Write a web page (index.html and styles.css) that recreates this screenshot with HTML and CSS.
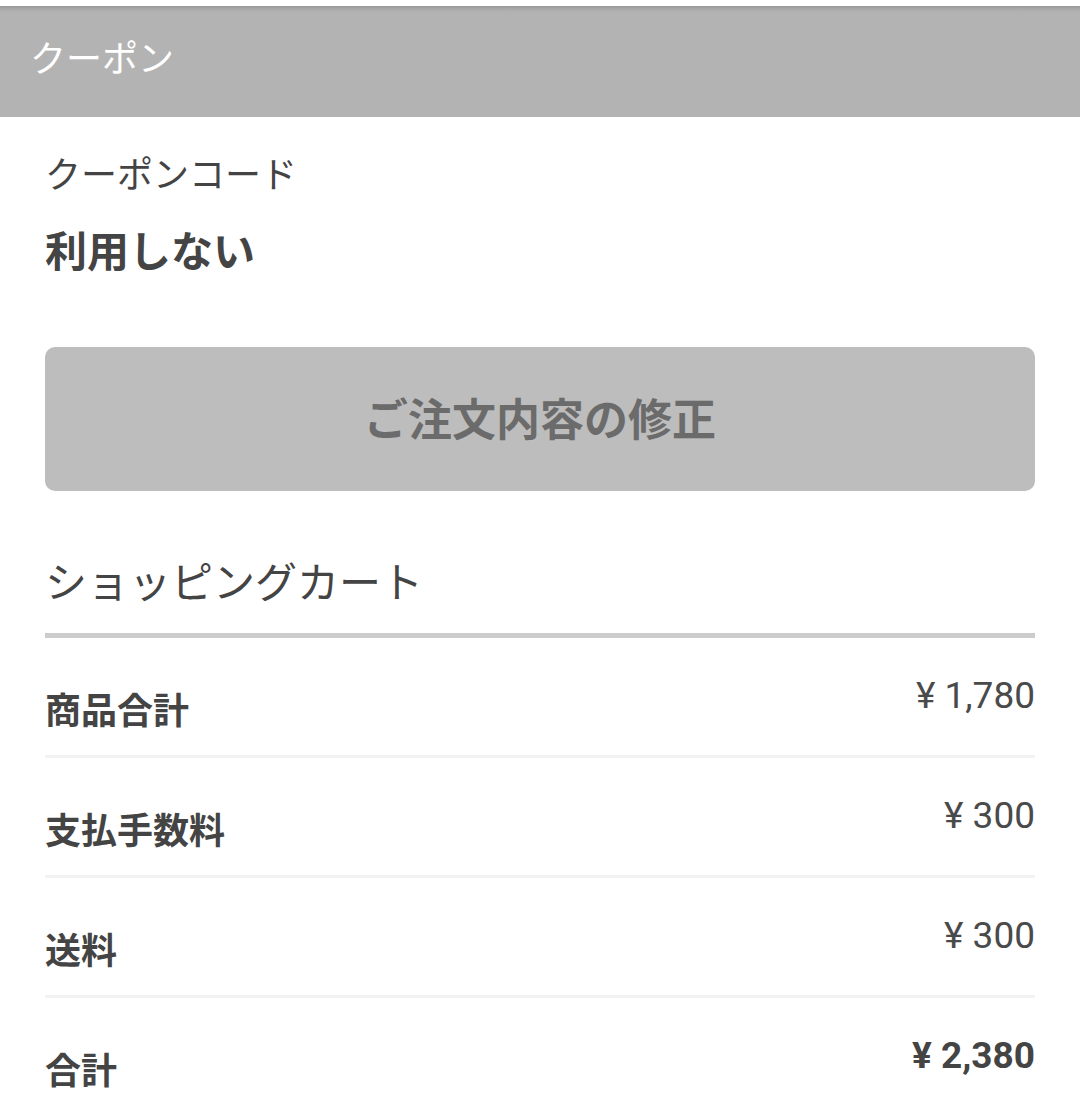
FILE: index.html
```html
<!DOCTYPE html>
<html lang="ja">
<head>
<meta charset="utf-8">
<title>クーポン</title>
<link rel="stylesheet" href="styles.css">
</head>
<body>
<header class="appbar"><span class="appbar-title">クーポン</span></header>
<main class="content">
  <div class="coupon-label">クーポンコード</div>
  <div class="coupon-value">利用しない</div>
  <button class="edit-btn" type="button">ご注文内容の修正</button>
  <h2 class="cart-title">ショッピングカート</h2>
  <div class="cart-rule"></div>
  <div class="row">
    <span class="row-label">商品合計</span>
    <span class="row-price">¥ 1,780</span>
  </div>
  <div class="row">
    <span class="row-label">支払手数料</span>
    <span class="row-price">¥ 300</span>
  </div>
  <div class="row">
    <span class="row-label">送料</span>
    <span class="row-price">¥ 300</span>
  </div>
  <div class="row row-total">
    <span class="row-label">合計</span>
    <span class="row-price">¥ 2,380</span>
  </div>
</main>
</body>
</html>
```

FILE: styles.css
```css
* { box-sizing: border-box; }
html, body {
  margin: 0;
  padding: 0;
  background: #ffffff;
}
body {
  width: 1080px;
  height: 1114px;
  overflow: hidden;
  padding-top: 6px;
  font-family: "Noto Sans CJK JP", "Noto Sans", sans-serif;
  color: #444444;
}
.appbar {
  height: 111px;
  display: flex;
  align-items: center;
  padding: 0 0 11px 30px;
  background: linear-gradient(to bottom, #969696 0px, #a9a9a9 3px, #b3b3b3 6px, #b3b3b3 100%);
}
.appbar-title {
  font-size: 36px;
  line-height: 50px;
  color: #ffffff;
}
.content {
  padding: 0 45px;
}
.coupon-label {
  margin-top: 30px;
  font-size: 36px;
  line-height: 50px;
  color: #444444;
}
.coupon-value {
  margin-top: 27px;
  font-size: 42px;
  line-height: 50px;
  font-weight: 700;
  color: #444444;
}
.edit-btn {
  display: flex;
  align-items: center;
  justify-content: center;
  width: 100%;
  height: 144px;
  margin-top: 73px;
  border: none;
  border-radius: 10px;
  background: #bdbdbd;
  color: #6b6b6b;
  font-family: "Noto Sans CJK JP", sans-serif;
  font-size: 44px;
  font-weight: 700;
  padding: 0 0 4px;
}
.cart-title {
  margin: 64px 0 0;
  font-size: 42px;
  line-height: 50px;
  font-weight: 400;
  color: #444444;
}
.cart-rule {
  margin-top: 28px;
  height: 5px;
  background: #cccccc;
}
.row {
  display: flex;
  justify-content: space-between;
  align-items: flex-start;
  height: 120px;
  border-bottom: 3px solid #f2f2f2;
}
.row-total {
  border-bottom: none;
}
.row-label {
  margin-top: 43px;
  font-size: 36px;
  line-height: 54px;
  font-weight: 700;
  color: #444444;
}
.row-price {
  margin-top: 31px;
  font-family: Roboto, "Noto Sans CJK JP", sans-serif;
  font-size: 37px;
  line-height: 54px;
  color: #4a4a4a;
}
.row-total .row-price {
  font-weight: 700;
  color: #444444;
}
```
